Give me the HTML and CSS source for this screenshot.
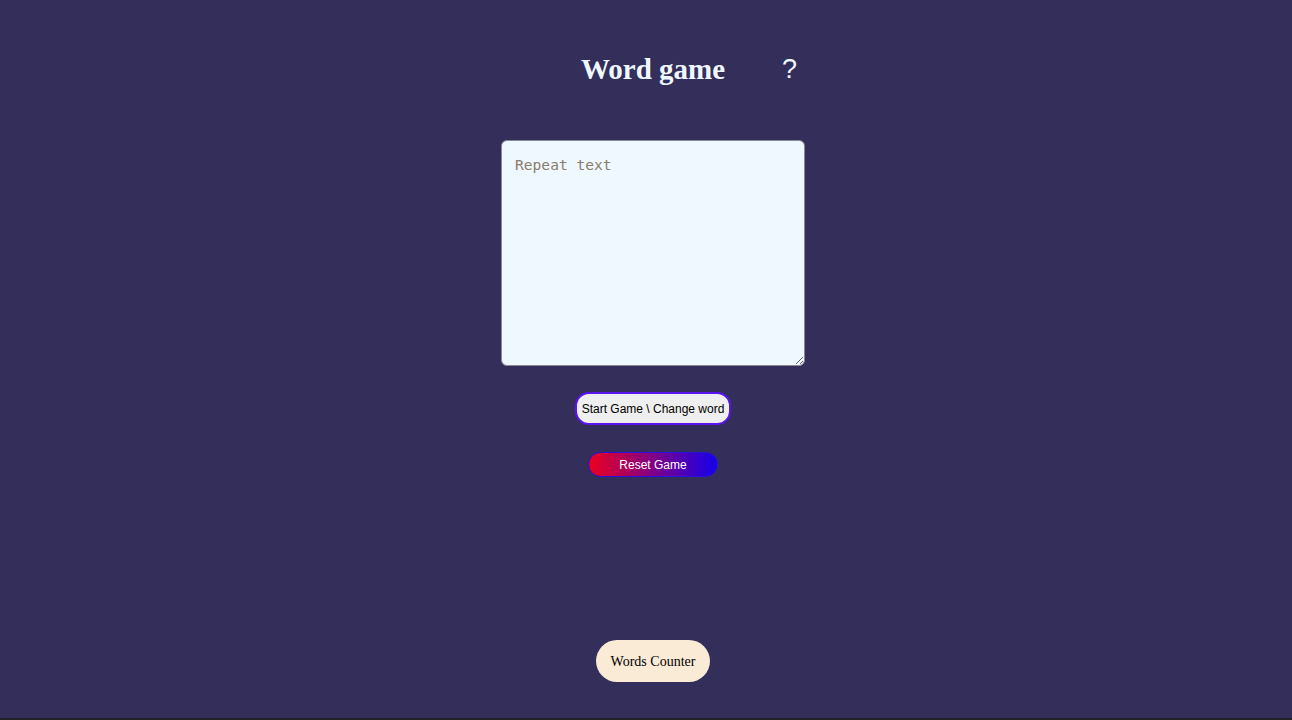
FILE: index.html
```html
<!DOCTYPE html>
<html>
<head>
<meta charset="utf-8">
<link rel="stylesheet" href="styles.css">
</head>
<body>
<div class="page">
  <header class="top">
    <span class="side"></span>
    <h1 class="title">Word game</h1>
    <span class="side"><span class="help">?</span></span>
  </header>
  <textarea class="input" placeholder="Repeat text"></textarea>
  <button class="start">Start Game \ Change word</button>
  <button class="reset">Reset Game</button>
  <div class="spacer"></div>
  <div class="counter">Words Counter</div>
</div>
</body>
</html>
```
FILE: styles.css
```css
html { background: #222226; }
body { margin: 0; }
.page {
  height: 718px;
  background: #332e5a;
  display: flex;
  flex-direction: column;
  align-items: center;
  padding-left: 14px;
  box-sizing: border-box;
}
.top {
  display: grid;
  grid-template-columns: 1fr auto 1fr;
  width: 600px;
  margin-top: 51px;
  align-items: center;
}
.title {
  margin: 0;
  font-family: "Liberation Serif", serif;
  font-weight: bold;
  font-size: 29px;
  line-height: 36px;
  color: #f0f8ff;
}
.help {
  margin-left: 57px;
  font-family: "Liberation Sans", sans-serif;
  font-size: 27px;
  color: #f0f8ff;
  line-height: 36px;
}
.input {
  margin-top: 53px;
  width: 304px;
  height: 226px;
  box-sizing: border-box;
  background: #f0f8ff;
  border: 1px solid #8a8a96;
  border-radius: 6px;
  padding: 15px 13px;
  font-family: "DejaVu Sans Mono", "Liberation Mono", monospace;
  font-size: 14.6px;
  resize: vertical;
}
.input::placeholder { color: #8a7d6d; }
.start {
  margin-top: 26px;
  height: 33px;
  padding: 0 5px;
  background: #efefef;
  border: 2px solid #5a14f0;
  border-radius: 14px;
  font-family: "Liberation Sans", sans-serif;
  font-size: 12px;
  color: #000;
}
.reset {
  margin-top: 27px;
  width: 130px;
  height: 25px;
  background: linear-gradient(to right, #ec0020, #1400ec);
  border: 1px solid #2a10d8;
  border-radius: 13px;
  font-family: "Liberation Sans", sans-serif;
  font-size: 12px;
  color: #fff;
}
.spacer { flex: 1; }
.counter {
  margin-bottom: 36px;
  height: 42px;
  width: 114px;
  display: flex;
  align-items: center;
  justify-content: center;
  padding-top: 1px;
  box-sizing: border-box;
  background: #faebd7;
  border-radius: 21px;
  font-family: "Liberation Serif", serif;
  font-size: 14px;
  color: #000;
}
```
